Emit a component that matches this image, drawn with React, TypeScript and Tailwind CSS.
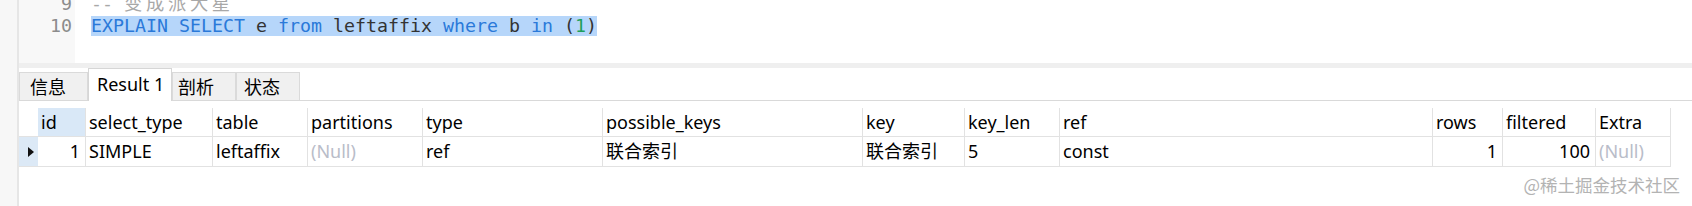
import type { ReactNode } from 'react';

const MONO = "font-['DejaVu_Sans_Mono','Noto_Sans_CJK_SC',monospace]";
const SANS = "font-['Noto_Sans','Noto_Sans_CJK_SC',sans-serif]";

type Column = {
  key: string;
  width: string;
  align?: 'right';
};

const COLUMNS: Column[] = [
  { key: 'id', width: 'w-[48px]', align: 'right' },
  { key: 'select_type', width: 'w-[127px]' },
  { key: 'table', width: 'w-[95px]' },
  { key: 'partitions', width: 'w-[115px]' },
  { key: 'type', width: 'w-[180px]' },
  { key: 'possible_keys', width: 'w-[260px]' },
  { key: 'key', width: 'w-[102px]' },
  { key: 'key_len', width: 'w-[95px]' },
  { key: 'ref', width: 'w-[373px]' },
  { key: 'rows', width: 'w-[70px]', align: 'right' },
  { key: 'filtered', width: 'w-[93px]', align: 'right' },
  { key: 'Extra', width: 'w-[75px]' },
];

const ROW: Record<string, string | null> = {
  id: '1',
  select_type: 'SIMPLE',
  table: 'leftaffix',
  partitions: null,
  type: 'ref',
  possible_keys: '联合索引',
  key: '联合索引',
  key_len: '5',
  ref: 'const',
  rows: '1',
  filtered: '100',
  Extra: null,
};

function Kw({ children }: { children: ReactNode }) {
  return <span className="text-[#2a79d9]">{children}</span>;
}

function Editor() {
  return (
    <div className={`flex h-[63px] overflow-hidden text-[18.27px] ${MONO}`}>
      <div className="w-[56px] shrink-0 bg-[#f8f8f8]" >
        <div className="-mt-[7px] flex flex-col pr-[3px] text-right text-[#8c8c8c]">
          <div className="h-[22px] leading-[22px]">9</div>
          <div className="h-[22px] leading-[22px]">10</div>
        </div>
      </div>
      <div className="-mt-[7px] flex flex-col pl-[16px]">
        <div className="h-[22px] whitespace-pre leading-[22px] text-[#a8a8a8]">
          -- <span className="tracking-[3.7px]">变成派大星</span>
        </div>
        <div className="flex h-[22px] items-center">
          <span className="inline-block h-[20px] whitespace-pre bg-[#b6d6fa] leading-[20px] text-[#333333]">
            <Kw>EXPLAIN</Kw> <Kw>SELECT</Kw> e <Kw>from</Kw> leftaffix <Kw>where</Kw> b <Kw>in</Kw> (
            <span className="text-[#1d9f5a]">1</span>)
          </span>
        </div>
      </div>
    </div>
  );
}

function Tab({
  label,
  active,
  width,
  pad,
}: {
  label: string;
  active?: boolean;
  width: string;
  pad: string;
}) {
  return (
    <div
      className={[
        'shrink-0 border border-b-0 leading-[28px] text-[18px] text-black',
        width,
        pad,
        active
          ? 'relative -mb-px h-[33px] border-[#d6d6d6] bg-white pt-[1px]'
          : 'h-[28px] border-[#dadada] bg-[#f0f0f0]',
      ].join(' ')}
    >
      {label}
    </div>
  );
}

function Tabs() {
  return (
    <div className={`flex h-[33px] items-end border-b border-[#d9d9d9] ${SANS}`}>
      <Tab label="信息" width="w-[69px]" pad="pl-[10px]" />
      <Tab label="Result 1" active width="w-[84px]" pad="pl-[8px]" />
      <Tab label="剖析" width="w-[64px]" pad="pl-[5px]" />
      <Tab label="状态" width="w-[64px]" pad="pl-[7px]" />
    </div>
  );
}

function ResultGrid() {
  return (
    <div className={`flex flex-col pt-[7px] text-[18px] leading-[28px] text-black ${SANS}`}>
      <div className="flex h-[29px]">
        <div className="w-[19px] shrink-0 border-b border-[#e2e2e2]" />
        {COLUMNS.map((col) => (
          <div
            key={col.key}
            className={[
              'shrink-0 border-b border-r border-[#e2e2e2] pl-[3px] whitespace-nowrap',
              col.width,
              col.key === 'id' ? 'bg-[#d9e8f7]' : 'bg-white',
            ].join(' ')}
          >
            {col.key}
          </div>
        ))}
      </div>
      <div className="flex h-[30px]">
        <div className="flex w-[19px] shrink-0 items-center justify-end border-b border-[#e2e2e2] bg-[#dce9f6] pr-[4px]">
          <svg width="6" height="10" viewBox="0 0 6 10">
            <path d="M0 0 L6 5 L0 10 Z" fill="#111111" />
          </svg>
        </div>
        {COLUMNS.map((col) => {
          const value = ROW[col.key];
          return (
            <div
              key={col.key}
              className={[
                'shrink-0 border-b border-r border-[#e2e2e2] whitespace-nowrap',
                col.width,
                col.align === 'right' ? 'pr-[5px] text-right' : 'pl-[3px]',
              ].join(' ')}
            >
              {value === null ? (
                <span className="text-[#b9bdc9]">(Null)</span>
              ) : (
                value
              )}
            </div>
          );
        })}
      </div>
    </div>
  );
}

export default function App() {
  return (
    <div className="relative flex h-[206px] w-[1692px] overflow-hidden bg-white">
      <div className="w-[19px] shrink-0 border-r-2 border-[#e6e6e6] bg-[#f7f7f7]" />
      <div className="flex min-w-0 flex-1 flex-col">
        <Editor />
        <div className="h-[5px] bg-[#efefef]" />
        <Tabs />
        <ResultGrid />
      </div>
      <div className="absolute right-[12px] top-[172px] font-['Noto_Sans_CJK_SC',sans-serif] text-[17.5px] text-[#b3b3b3] [text-shadow:0_0_2px_#ffffff]">
        @稀土掘金技术社区
      </div>
    </div>
  );
}
